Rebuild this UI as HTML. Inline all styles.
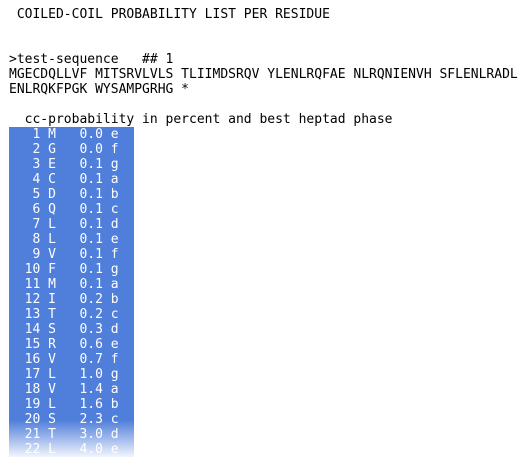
<!DOCTYPE html>
<html><head><style>
html,body{margin:0;padding:0;background:#fff;width:529px;height:458px;overflow:hidden}
pre{position:absolute;left:9px;top:7px;margin:0;font-family:"DejaVu Sans Mono","Liberation Mono",monospace;font-size:13px;line-height:15px;color:#000}
.h{background:#4f7edb;color:#fff;display:inline-block;width:125px}
.fade{position:absolute;left:0;top:420px;width:200px;height:38px;background:linear-gradient(to bottom,rgba(255,255,255,0),rgba(255,255,255,0.95))}
</style></head><body>
<pre> COILED-COIL PROBABILITY LIST PER RESIDUE


&gt;test-sequence   ## 1
MGECDQLLVF MITSRVLVLS TLIIMDSRQV YLENLRQFAE NLRQNIENVH SFLENLRADL
ENLRQKFPGK WYSAMPGRHG *

  cc-probability in percent and best heptad phase
<span class="h">   1 M   0.0 e   </span>
<span class="h">   2 G   0.0 f   </span>
<span class="h">   3 E   0.1 g   </span>
<span class="h">   4 C   0.1 a   </span>
<span class="h">   5 D   0.1 b   </span>
<span class="h">   6 Q   0.1 c   </span>
<span class="h">   7 L   0.1 d   </span>
<span class="h">   8 L   0.1 e   </span>
<span class="h">   9 V   0.1 f   </span>
<span class="h">  10 F   0.1 g   </span>
<span class="h">  11 M   0.1 a   </span>
<span class="h">  12 I   0.2 b   </span>
<span class="h">  13 T   0.2 c   </span>
<span class="h">  14 S   0.3 d   </span>
<span class="h">  15 R   0.6 e   </span>
<span class="h">  16 V   0.7 f   </span>
<span class="h">  17 L   1.0 g   </span>
<span class="h">  18 V   1.4 a   </span>
<span class="h">  19 L   1.6 b   </span>
<span class="h">  20 S   2.3 c   </span>
<span class="h">  21 T   3.0 d   </span>
<span class="h">  22 L   4.0 e   </span></pre>
<div class="fade"></div>
</body></html>
